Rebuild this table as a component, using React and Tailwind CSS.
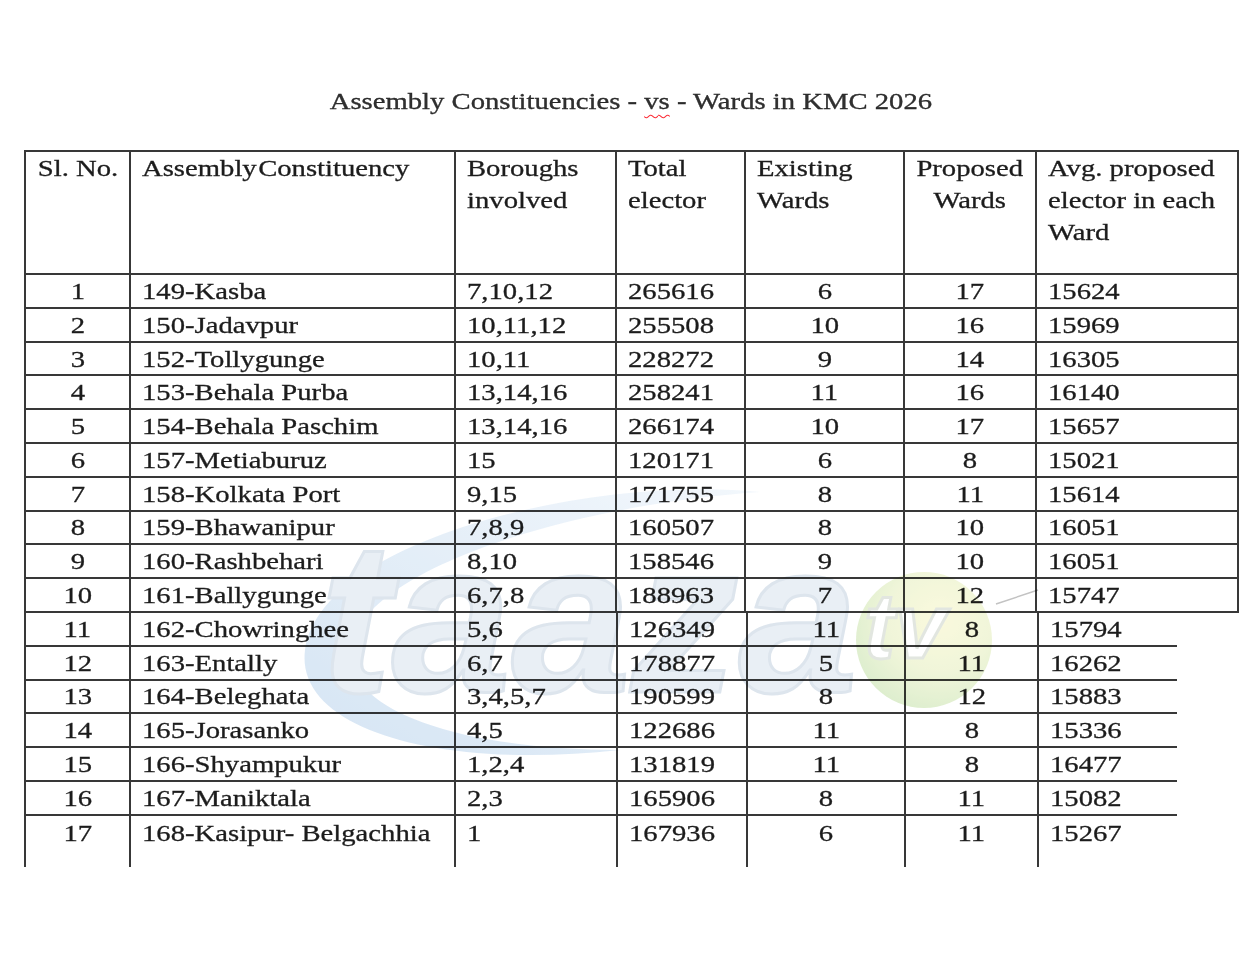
import React from "react";

const topRows = [
  ["1", "149-Kasba", "7,10,12", "265616", "6", "17", "15624"],
  ["2", "150-Jadavpur", "10,11,12", "255508", "10", "16", "15969"],
  ["3", "152-Tollygunge", "10,11", "228272", "9", "14", "16305"],
  ["4", "153-Behala Purba", "13,14,16", "258241", "11", "16", "16140"],
  ["5", "154-Behala Paschim", "13,14,16", "266174", "10", "17", "15657"],
  ["6", "157-Metiaburuz", "15", "120171", "6", "8", "15021"],
  ["7", "158-Kolkata Port", "9,15", "171755", "8", "11", "15614"],
  ["8", "159-Bhawanipur", "7,8,9", "160507", "8", "10", "16051"],
  ["9", "160-Rashbehari", "8,10", "158546", "9", "10", "16051"],
  ["10", "161-Ballygunge", "6,7,8", "188963", "7", "12", "15747"],
];

const bottomRows = [
  ["11", "162-Chowringhee", "5,6", "126349", "11", "8", "15794"],
  ["12", "163-Entally", "6,7", "178877", "5", "11", "16262"],
  ["13", "164-Beleghata", "3,4,5,7", "190599", "8", "12", "15883"],
  ["14", "165-Jorasanko", "4,5", "122686", "11", "8", "15336"],
  ["15", "166-Shyampukur", "1,2,4", "131819", "11", "8", "16477"],
  ["16", "167-Maniktala", "2,3", "165906", "8", "11", "15082"],
  ["17", "168-Kasipur- Belgachhia", "1", "167936", "6", "11", "15267"],
];

// columns 0, 4 and 5 are centred, the rest start at the left padding
const centred = [true, false, false, false, true, true, false];

// the scan is stretched sideways, so the type is too
const Wide = ({ children, center }) => (
  <span
    className={`inline-block whitespace-nowrap scale-x-[1.22] ${
      center ? "origin-center" : "origin-left"
    }`}
  >
    {children}
  </span>
);

const Watermark = () => (
  <svg
    className="pointer-events-none absolute left-[266px] top-[330px] h-[300px] w-[780px] opacity-60 mix-blend-multiply"
    viewBox="0 0 780 300"
  >
    <defs>
      <linearGradient id="swoosh" x1="0" y1="1" x2="1" y2="0">
        <stop offset="0" stopColor="#b9d3ec" />
        <stop offset="1" stopColor="#eaf2fa" />
      </linearGradient>
      <radialGradient id="ball" cx="0.62" cy="0.35" r="0.7">
        <stop offset="0" stopColor="#f7f5c6" />
        <stop offset="0.55" stopColor="#e6efc0" />
        <stop offset="1" stopColor="#c6e2ad" />
      </radialGradient>
    </defs>
    <path
      d="M470 12 C300 -5 30 60 15 170 C5 250 150 290 330 270 C170 270 55 230 60 170 C70 90 280 25 470 12 Z"
      fill="url(#swoosh)"
    />
    <text
      x="30"
      y="212"
      fontFamily="'Liberation Sans', Arial, sans-serif"
      fontWeight="700"
      fontStyle="italic"
      fontSize="215"
      fill="#dbe4ee"
      stroke="#c6d3e1"
      strokeWidth="3"
    >
      taaza
    </text>
    <circle cx="634" cy="160" r="68" fill="url(#ball)" />
    <text
      x="574"
      y="178"
      fontFamily="'Liberation Sans', Arial, sans-serif"
      fontWeight="700"
      fontStyle="italic"
      fontSize="92"
      fill="#ffffff"
      stroke="#cfd6cc"
      strokeWidth="3"
    >
      tv
    </text>
    <path d="M706 124 L748 110" stroke="#9a9a9a" strokeWidth="1.5" />
  </svg>
);

export default function App() {
  return (
    <div className="min-h-screen bg-white pl-[24px] pt-[84px] font-['Liberation_Serif','Times_New_Roman',serif] text-[23.5px] text-[#1c1c1c] [-webkit-text-stroke:0.3px_#1c1c1c]">
      <h1 className="w-[1214px] text-center leading-[34px] text-[#303030]">
        <Wide center>
          Assembly Constituencies -{" "}
          <span className="underline decoration-red-500 decoration-wavy decoration-1 underline-offset-[5px]">
            vs
          </span>{" "}
          - Wards in KMC 2026
        </Wide>
      </h1>

      <div className="relative mt-[32px] w-fit">
        <div className="grid w-fit grid-cols-[105px_325px_161px_129px_159px_132px_202px] border-l-2 border-t-2 border-[#383838]">
          <div className="h-[123px] border-b-2 border-r-2 border-[#383838] text-center leading-[32px]">
            <Wide center>Sl. No.</Wide>
          </div>
          <div className="h-[123px] border-b-2 border-r-2 border-[#383838] pl-[11px] leading-[32px]">
            <Wide>
              Assembly<span className="[word-spacing:-0.2em]"> </span>Constituency
            </Wide>
          </div>
          <div className="h-[123px] border-b-2 border-r-2 border-[#383838] pl-[11px] leading-[32px]">
            <Wide>
              Boroughs
              <br />
              involved
            </Wide>
          </div>
          <div className="h-[123px] border-b-2 border-r-2 border-[#383838] pl-[11px] leading-[32px]">
            <Wide>
              Total
              <br />
              elector
            </Wide>
          </div>
          <div className="h-[123px] border-b-2 border-r-2 border-[#383838] pl-[11px] leading-[32px]">
            <Wide>
              Existing
              <br />
              Wards
            </Wide>
          </div>
          <div className="h-[123px] border-b-2 border-r-2 border-[#383838] text-center leading-[32px]">
            <Wide center>
              Proposed
              <br />
              Wards
            </Wide>
          </div>
          <div className="h-[123px] border-b-2 border-r-2 border-[#383838] pl-[11px] leading-[32px]">
            <Wide>
              Avg. proposed
              <br />
              elector in each
              <br />
              Ward
            </Wide>
          </div>

          {topRows.map((row) =>
            row.map((val, i) => (
              <div
                key={row[0] + "-" + i}
                className={`flex h-[33.8px] items-center border-b-2 border-r-2 border-[#383838] leading-[34px] ${
                  centred[i] ? "justify-center" : "pl-[11px]"
                }`}
              >
                <Wide center={centred[i]}>{val}</Wide>
              </div>
            ))
          )}
        </div>

        <div className="grid w-fit grid-cols-[105px_325px_162px_130px_158px_133px_138px] border-l-2 border-[#383838]">
          {bottomRows.map((row, r) => {
            const last = r === bottomRows.length - 1;
            return row.map((val, i) => {
              const edge = i === row.length - 1;
              return (
                <div
                  key={row[0] + "-" + i}
                  className={`flex leading-[34px] border-[#383838] ${
                    last ? "h-[51px] items-start" : "h-[33.8px] items-center border-b-2"
                  } ${edge ? "" : "border-r-2"} ${
                    centred[i] ? "justify-center" : "pl-[11px]"
                  }`}
                >
                  <Wide center={centred[i]}>{val}</Wide>
                </div>
              );
            });
          })}
        </div>

        <Watermark />
      </div>
    </div>
  );
}
